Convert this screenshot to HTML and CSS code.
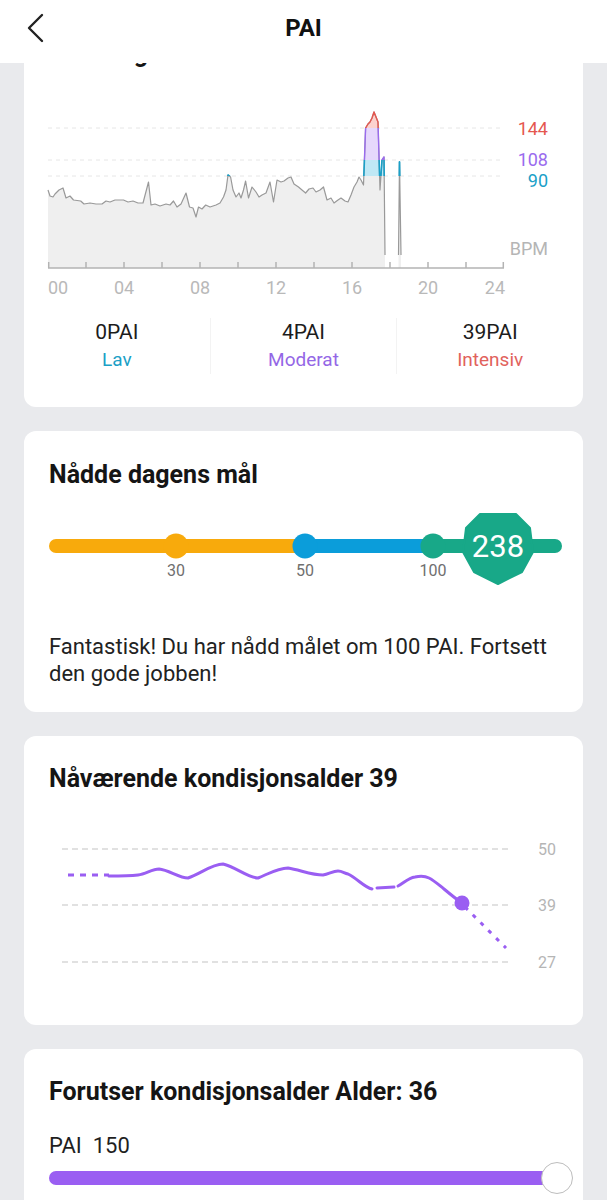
FILE: index.html
```html
<!DOCTYPE html>
<html lang="nb">
  <head>
    <meta charset="UTF-8" />
    <meta name="viewport" content="width=device-width, initial-scale=1.0" />
    <title>PAI</title>
    <link rel="stylesheet" href="styles.css">
  </head>

  <body>
    <div class="topbar">
      <div class="back">
        <svg width="24" height="30" viewBox="0 0 24 30">
          <polyline points="17,2 4,15 17,28" fill="none" stroke="#222" stroke-width="2.4" stroke-linecap="round" stroke-linejoin="round" />
        </svg>
      </div>
      <div class="topbar-title">PAI</div>
      <div></div>
    </div>

    <div class="page">
      <!-- dagens puls -->
      <div class="card card-first">
        <div class="card-title">PAI i dag</div>
        <svg class="hr-chart" width="511" height="200" viewBox="0 0 511 200">
          <defs>
            <path id="hr-line" d="M0,90 L2,96 L5,97 L7,94 L11,90 L15,88 L18,98 L22,96 L25.5,100 L32.7,101 L36,104 L42,103 L48,104 L54,104 L58,101 L62,102 L67,100 L75.5,100 L80,102 L85,101 L90,103 L95,103 L100.5,82 L103,105 L107,104 L112,106 L118,104 L122,105 L125.5,101 L129,107 L133,104 L138,93 L141.5,107 L145,108 L148,117 L150.5,107 L154,109 L157.7,105 L162,107 L168,105 L172,103 L175.5,97 L178,90 L180,75 L182.6,77 L185,90 L188,97 L191,93 L193,98 L195.5,90 L197.6,81 L200.5,98 L204,87 L208,92 L211,97 L214,95 L218,93 L222,82 L225.5,102 L229,80 L233,82 L236,81 L240,78 L243,77 L246,84 L250.5,87 L254,90 L257.6,93 L261,89 L265,88 L268,92 L272,90 L275.5,87 L279,100 L283,98 L286,103 L290,100 L293,98 L297,101 L300,102 L303,95 L306,87 L309,82 L311,77 L313,80 L315.5,85 L317.6,28 L320,24 L322,22 L324,18 L326,12 L328,17 L330,22 L332,90 L334,60 L336,57 L337,155" />
            <path id="hr-area" d="M0,168 L0,90 L2,96 L5,97 L7,94 L11,90 L15,88 L18,98 L22,96 L25.5,100 L32.7,101 L36,104 L42,103 L48,104 L54,104 L58,101 L62,102 L67,100 L75.5,100 L80,102 L85,101 L90,103 L95,103 L100.5,82 L103,105 L107,104 L112,106 L118,104 L122,105 L125.5,101 L129,107 L133,104 L138,93 L141.5,107 L145,108 L148,117 L150.5,107 L154,109 L157.7,105 L162,107 L168,105 L172,103 L175.5,97 L178,90 L180,75 L182.6,77 L185,90 L188,97 L191,93 L193,98 L195.5,90 L197.6,81 L200.5,98 L204,87 L208,92 L211,97 L214,95 L218,93 L222,82 L225.5,102 L229,80 L233,82 L236,81 L240,78 L243,77 L246,84 L250.5,87 L254,90 L257.6,93 L261,89 L265,88 L268,92 L272,90 L275.5,87 L279,100 L283,98 L286,103 L290,100 L293,98 L297,101 L300,102 L303,95 L306,87 L309,82 L311,77 L313,80 L315.5,85 L317.6,28 L320,24 L322,22 L324,18 L326,12 L328,17 L330,22 L332,90 L334,60 L336,57 L337,155 L337,168 Z M350.5,168 L350.5,155 L351.5,62 L353,155 L353,168 Z" />
            <path id="hr-spike" d="M350.5,155 L351.5,62 L353,155" />
            <clipPath id="zone-red"><rect x="0" y="0" width="511" height="28" /></clipPath>
            <clipPath id="zone-purple"><rect x="0" y="28" width="511" height="32" /></clipPath>
            <clipPath id="zone-teal"><rect x="0" y="60" width="511" height="16" /></clipPath>
          </defs>

          <line class="grid" x1="0" y1="28" x2="456" y2="28" />
          <line class="grid" x1="0" y1="60" x2="456" y2="60" />
          <line class="grid" x1="0" y1="76" x2="456" y2="76" />

          <use href="#hr-area" fill="#efefef" />
          <use href="#hr-area" fill="#bfe8f5" clip-path="url(#zone-teal)" />
          <use href="#hr-area" fill="#e6d8fc" clip-path="url(#zone-purple)" />
          <use href="#hr-area" fill="#fcd2ce" clip-path="url(#zone-red)" />

          <g fill="none" stroke-width="1.2" stroke-linejoin="round">
            <use href="#hr-line" stroke="#999" />
            <use href="#hr-spike" stroke="#999" />
            <use href="#hr-line" stroke="#1aa0c8" stroke-width="1.6" clip-path="url(#zone-teal)" />
            <use href="#hr-spike" stroke="#1aa0c8" stroke-width="1.8" clip-path="url(#zone-teal)" />
            <use href="#hr-line" stroke="#9a6bee" stroke-width="1.4" clip-path="url(#zone-purple)" />
            <use href="#hr-spike" stroke="#1aa0c8" stroke-width="1.8" clip-path="url(#zone-purple)" />
            <use href="#hr-line" stroke="#e5574f" stroke-width="1.4" clip-path="url(#zone-red)" />
          </g>

          <g class="axis">
            <line x1="0" y1="168" x2="456" y2="168" />
            <line x1="0.7" y1="162" x2="0.7" y2="168" />
            <line x1="38" y1="162" x2="38" y2="168" />
            <line x1="76" y1="162" x2="76" y2="168" />
            <line x1="114" y1="162" x2="114" y2="168" />
            <line x1="152" y1="162" x2="152" y2="168" />
            <line x1="190" y1="162" x2="190" y2="168" />
            <line x1="228" y1="162" x2="228" y2="168" />
            <line x1="266" y1="162" x2="266" y2="168" />
            <line x1="304" y1="162" x2="304" y2="168" />
            <line x1="342" y1="162" x2="342" y2="168" />
            <line x1="380" y1="162" x2="380" y2="168" />
            <line x1="418" y1="162" x2="418" y2="168" />
            <line x1="455.3" y1="162" x2="455.3" y2="168" />
          </g>

          <g class="axis-label">
            <text x="0" y="194">00</text>
            <text x="76" y="194" text-anchor="middle">04</text>
            <text x="152" y="194" text-anchor="middle">08</text>
            <text x="228" y="194" text-anchor="middle">12</text>
            <text x="304" y="194" text-anchor="middle">16</text>
            <text x="380" y="194" text-anchor="middle">20</text>
            <text x="457" y="194" text-anchor="end">24</text>
          </g>

          <g class="zone-label">
            <text x="500" y="35" fill="#e5574f">144</text>
            <text x="500" y="66" fill="#9a6bee">108</text>
            <text x="500" y="87" fill="#1aa0c8">90</text>
            <text x="500" y="155" fill="#b5b5b5">BPM</text>
          </g>
        </svg>

        <div class="stats">
          <div class="stat">
            <div class="stat-value">0PAI</div>
            <div class="stat-name stat-low">Lav</div>
          </div>
          <div class="stat">
            <div class="stat-value">4PAI</div>
            <div class="stat-name stat-mid">Moderat</div>
          </div>
          <div class="stat">
            <div class="stat-value">39PAI</div>
            <div class="stat-name stat-high">Intensiv</div>
          </div>
        </div>
      </div>

      <!-- mål -->
      <div class="card card-goal">
        <div class="card-title">Nådde dagens mål</div>
        <svg class="goal" width="559" height="90" viewBox="0 0 559 90">
          <line x1="32" y1="40" x2="281" y2="40" stroke="#f8aa0c" stroke-width="14" stroke-linecap="round" />
          <line x1="281" y1="40" x2="409" y2="40" stroke="#0b9dda" stroke-width="14" />
          <line x1="409" y1="40" x2="531" y2="40" stroke="#18a888" stroke-width="14" stroke-linecap="round" />
          <circle cx="152" cy="40" r="12.5" fill="#f8aa0c" />
          <circle cx="281" cy="40" r="12.5" fill="#0b9dda" />
          <circle cx="409" cy="40" r="12.5" fill="#18a888" />
          <g class="goal-label">
            <text x="152" y="70">30</text>
            <text x="281" y="70">50</text>
            <text x="409" y="70">100</text>
          </g>
          <polygon points="456,8 492,8 506,22 509,46 498,66 474,78 450,66 439,46 442,22" fill="#18a888" stroke="#18a888" stroke-width="2" stroke-linejoin="round" />
          <text class="goal-badge" x="474" y="51">238</text>
        </svg>
        <p class="card-text">Fantastisk! Du har nådd målet om 100 PAI. Fortsett den gode jobben!</p>
      </div>

      <!-- kondisjonsalder -->
      <div class="card card-age">
        <div class="card-title">Nåværende kondisjonsalder 39</div>
        <svg class="age-chart" width="559" height="170" viewBox="0 0 559 170">
          <line class="age-grid" x1="38" y1="28" x2="488" y2="28" />
          <line class="age-grid" x1="38" y1="84" x2="488" y2="84" />
          <line class="age-grid" x1="38" y1="141" x2="488" y2="141" />
          <g class="age-label">
            <text x="523" y="34">50</text>
            <text x="523" y="90">39</text>
            <text x="523" y="147">27</text>
          </g>
          <g fill="none" stroke="#9a5ef2" stroke-width="3" stroke-linejoin="round" stroke-linecap="round">
            <path d="M44,54 L85,54" stroke-dasharray="6 6" stroke-linecap="butt" />
            <path d="M85,55 C95,55 105,55 114,54 C122,53 128,48 135,48 C145,49 155,57 164,57 C176,53 188,43 199,43 C212,46 224,57 234,57 C244,53 254,47 264,47 C276,49 288,54 299,54 C305,53 309,50 314,50 C318,50 320,52 324,53 C334,58 340,66 348,68" />
            <path d="M353,67 L370,66" />
            <path d="M374,65 C380,62 384,57 391,56 C396,55 401,55 405,57 C411,60 416,65 420,68 C426,73 432,78 438,82" />
            <path d="M441,86 L482,127" stroke-dasharray="4 7" stroke-linecap="butt" />
          </g>
          <circle cx="438" cy="82" r="7.5" fill="#9a5ef2" />
        </svg>
      </div>

      <!-- prognose -->
      <div class="card card-forecast">
        <div class="card-title">Forutser kondisjonsalder Alder: 36</div>
        <div class="pai-value">PAI<span class="pai-number">150</span></div>
        <div class="slider">
          <div class="slider-track"></div>
          <div class="slider-thumb"></div>
        </div>
      </div>
    </div>
  </body>
</html>
```

FILE: styles.css
```css
* {
  box-sizing: border-box;
}
body {
  margin: 0;
  background: #e9eaed;
  font-family: Roboto, "Noto Sans", "Liberation Sans", sans-serif;
  color: #1f1f1f;
}

.topbar {
  position: fixed;
  top: 0;
  left: 0;
  right: 0;
  height: 63px;
  background: white;
  z-index: 10;
  display: grid;
  grid-template-columns: 80px 1fr 80px;
  align-items: center;
}

.back {
  padding-left: 25px;
  display: flex;
  margin-top: -7px;
}

.topbar-title {
  text-align: center;
  font-size: 24px;
  font-weight: bold;
  margin-top: -7px;
  color: #111;
}

.page {
  padding: 10px 24px 40px;
  display: flex;
  flex-direction: column;
  gap: 24px;
}

.card {
  background: white;
  border-radius: 12px;
  padding: 28px 0 24px;
}

.card-first {
  padding-top: 29px;
  padding-bottom: 25px;
}

.card-goal {
  padding-top: 29px;
  padding-bottom: 25px;
}

.card-title {
  padding: 0 25px;
  font-size: 25px;
  line-height: 30px;
  font-weight: bold;
  color: #151515;
}

.hr-chart {
  display: block;
  margin: 31px 24px 0;
  overflow: visible;
}

.grid {
  stroke: #e6e6e6;
  stroke-width: 1;
  stroke-dasharray: 4 4;
}

.axis line {
  stroke: #b3b3b3;
  stroke-width: 1.5;
}

.axis-label text {
  font-size: 18px;
  fill: #b9b9b9;
}

.zone-label text {
  font-size: 18px;
  text-anchor: end;
}

.stats {
  display: flex;
  margin-top: 18px;
  padding-bottom: 8px;
}

.stat {
  flex: 1;
  text-align: center;
  border-left: 1px solid #f3f3f3;
}

.stat:first-child {
  border-left: none;
}

.stat-value {
  font-size: 21px;
  line-height: 28px;
  color: #1c1c1c;
}

.stat-name {
  font-size: 19px;
  line-height: 28px;
}

.stat-low {
  color: #1b9fc6;
}

.stat-mid {
  color: #9467e6;
}

.stat-high {
  color: #e1625c;
}

.goal {
  display: block;
  margin-top: 16px;
}

.goal-label text {
  font-size: 16px;
  fill: #6f6f6f;
  text-anchor: middle;
}

.goal-badge {
  font-size: 31px;
  fill: white;
  text-anchor: middle;
}

.card-text {
  margin: 37px 0 0;
  padding: 0 25px;
  font-size: 22px;
  line-height: 27px;
  color: #222;
}

.card-age {
  padding-bottom: 34px;
}

.age-chart {
  display: block;
  margin-top: 27px;
}

.age-grid {
  stroke: #c4c4c4;
  stroke-width: 1.2;
  stroke-dasharray: 6 4;
}

.age-label text {
  font-size: 16px;
  fill: #b5b5b5;
  text-anchor: middle;
}

.pai-value {
  margin-top: 25px;
  padding: 0 25px;
  font-size: 22px;
  line-height: 28px;
}

.pai-number {
  margin-left: 11px;
}

.slider {
  position: relative;
  margin: 2px 25px 0;
  height: 32px;
  display: flex;
  align-items: center;
}

.slider-track {
  width: 99%;
  height: 14px;
  border-radius: 7px;
  background: #9a5ef2;
}

.slider-thumb {
  position: absolute;
  right: -15px;
  top: 0;
  width: 32px;
  height: 32px;
  border-radius: 50%;
  background: white;
  border: 1px solid #bdbdbd;
}
```
